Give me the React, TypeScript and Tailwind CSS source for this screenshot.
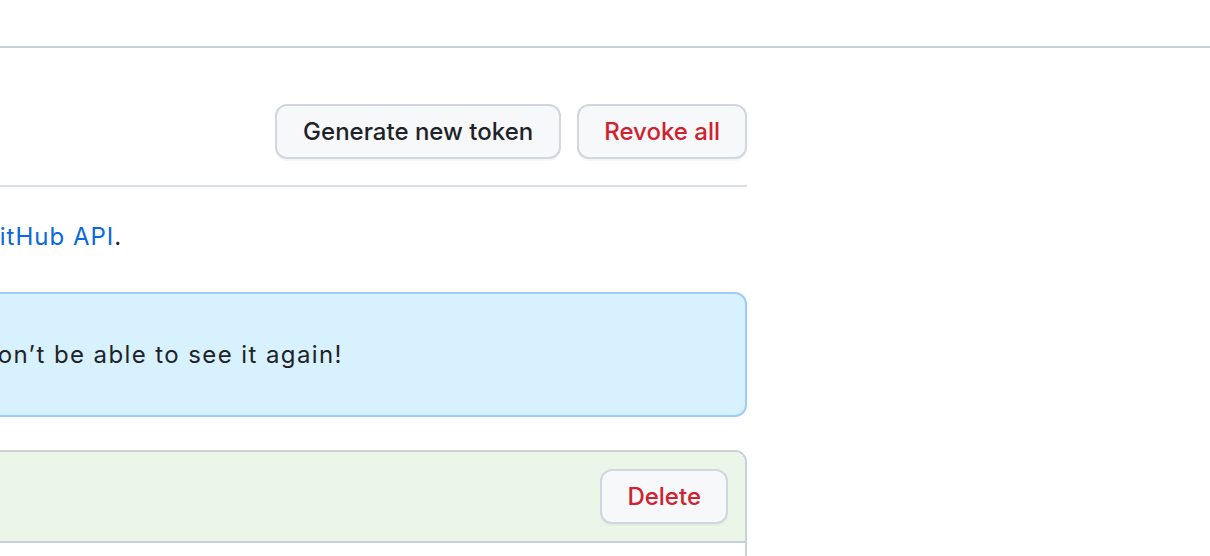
export default function App() {
  return (
    <div className="min-h-[556px] overflow-hidden bg-white font-[Inter,sans-serif] text-[24px] leading-[36px] text-[#1f2328]">
      <header className="h-[48px] border-b-2 border-[#c8d1da]" />

      <main className="ml-[-751px] w-[1498px] pt-[56px]">
        <div className="flex items-center justify-between border-b-2 border-[#d8dee4] pb-[26px]">
          <h2 className="text-[32px] font-normal">Personal access tokens (classic)</h2>
          <div className="flex gap-4">
            <button className="h-[55px] rounded-[12px] border-2 border-[#d0d7de] bg-[#f6f8fa] px-[26px] font-medium text-[#1f2328] shadow-[0_2px_0_rgba(31,35,40,0.04)]">
              Generate new token
            </button>
            <button className="h-[55px] rounded-[12px] border-2 border-[#d0d7de] bg-[#f6f8fa] px-[25px] font-medium text-[#cf222e] shadow-[0_2px_0_rgba(31,35,40,0.04)]">
              Revoke all
            </button>
          </div>
        </div>

        <p className="mt-[32px] tracking-[1px]">
          Tokens you have generated that can be used to access the{" "}
          <a href="#" className="text-[#0969da]">
            GitHub API
          </a>
          .
        </p>

        <div className="mt-[37px] rounded-[12px] border-2 border-[#9ccdfa] bg-[#d7f1fe] pb-[42px] pl-[6px] pr-[27px] pt-[43px] tracking-[1.4px]">
          Make sure to copy your personal access token now. You won’t be able to see it again!
        </div>

        <div className="mt-[33px] min-h-[200px] rounded-t-[12px] border-2 border-[#c8d1da]">
          <div className="flex items-center justify-between rounded-t-[10px] border-b-2 border-[#c8d1da] bg-[#ecf6e8] px-[17px] py-[17px]">
            <code className="font-[Liberation_Mono,monospace] text-[20px]">ghp_xxxxxxxxxxxxxxxx</code>
            <button className="h-[55px] rounded-[12px] border-2 border-[#d0d7de] bg-[#f6f8fa] px-[25px] font-medium text-[#cf222e] shadow-[0_2px_0_rgba(31,35,40,0.04)]">
              Delete
            </button>
          </div>
        </div>
      </main>
    </div>
  );
}
